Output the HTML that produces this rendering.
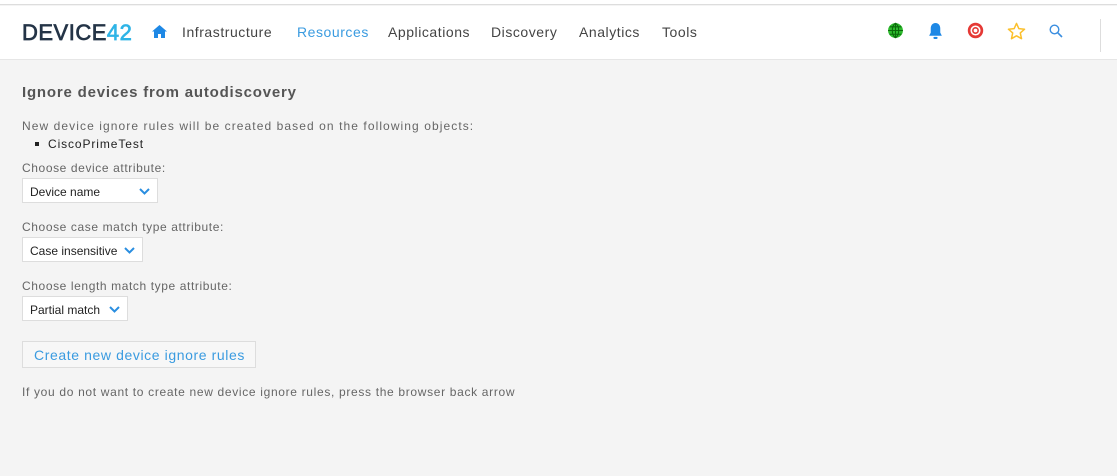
<!DOCTYPE html>
<html><head><style>
*{margin:0;padding:0;box-sizing:border-box}
body{width:1117px;height:476px;background:#f4f4f4;font-family:"Liberation Sans",sans-serif;color:#555;overflow:hidden;position:relative}
.top{position:absolute;left:0;top:0;width:1117px;height:5px;background:#fff;border-bottom:1px solid #ddd}
.hdr{position:absolute;left:0;top:6px;width:1117px;height:54px;background:#fff;border-bottom:1px solid #e6e6e6}
.logo{position:absolute;left:22px;top:14px;font-size:22px;letter-spacing:0.5px;color:#243447;-webkit-text-stroke:0.7px #243447}
.logo span{color:#2fb4e6;-webkit-text-stroke:0.7px #2fb4e6}
.nav{position:absolute;top:18px;font-size:14px;color:#444;letter-spacing:0.55px}
.ic{position:absolute;top:16px}
.sep{position:absolute;left:1100px;top:13px;width:1px;height:33px;background:#ddd}
.t{position:absolute;left:22px;font-size:12px;color:#666;letter-spacing:0.6px}
.sel{position:absolute;left:22px;height:25px;background:#fff;border:1px solid #ddd;font-size:12px;color:#222;padding:6px 0 0 7px}
.sel svg{position:absolute;right:7px;top:9px}
.btn{position:absolute;left:22px;top:341px;width:234px;height:27px;border:1px solid #ddd;background:#f7f7f7;color:#3a9be0;font-size:14px;padding:5px 0 0 11px;letter-spacing:0.6px}
</style></head><body>
<div class="top"></div>
<div class="hdr">
<div class="logo">DEVICE<span>42</span></div>
<svg class="ic" style="left:152px;top:19px" width="15" height="13" viewBox="0 0 15 13"><path d="M7.5 0L0 6.5h2V13h4V9h3v4h4V6.5h2z" fill="#1e88e5"/></svg>
<div class="nav" style="left:182px">Infrastructure</div>
<div class="nav" style="left:297px;color:#3a9be0">Resources</div>
<div class="nav" style="left:388px">Applications</div>
<div class="nav" style="left:491px">Discovery</div>
<div class="nav" style="left:579px">Analytics</div>
<div class="nav" style="left:662px">Tools</div>
<svg class="ic" style="left:887px" width="17" height="17" viewBox="0 0 16 16"><circle cx="8" cy="8" r="7" fill="#2dbb2d"/><path d="M1 8h14M8 1v14M2.5 4.5h11M2.5 11.5h11M8 1c-4 3-4 11 0 14M8 1c4 3 4 11 0 14" stroke="#0a6a0a" stroke-width="1" fill="none"/></svg>
<svg class="ic" style="left:927px" width="17" height="18" viewBox="0 0 16 17"><path d="M8 1c-3 0-4.5 2.5-4.5 5v4L2 13h12l-1.5-3V6C12.5 3.5 11 1 8 1z" fill="#1e88e5"/><rect x="6" y="14" width="4" height="2" rx="1" fill="#1e88e5"/></svg>
<svg class="ic" style="left:967px" width="17" height="17" viewBox="0 0 16 16"><circle cx="8" cy="8" r="6" fill="none" stroke="#e53935" stroke-width="2.5"/><circle cx="8" cy="8" r="2.5" fill="none" stroke="#e53935" stroke-width="1.5"/></svg>
<svg class="ic" style="left:1007px" width="19" height="18" viewBox="0 0 20 19"><path d="M10 1.5l2.5 5.5 6 .6-4.5 4 1.3 6L10 14.6 4.7 17.6l1.3-6-4.5-4 6-.6z" fill="none" stroke="#fbc02d" stroke-width="1.6" stroke-linejoin="round"/></svg>
<svg class="ic" style="left:1049px;top:18px" width="14" height="14" viewBox="0 0 14 14"><circle cx="5.5" cy="5.5" r="4.3" fill="none" stroke="#3a8ee0" stroke-width="1.4"/><path d="M8.7 8.7L13 13" stroke="#3a8ee0" stroke-width="1.6"/></svg>
<div class="sep"></div>
</div>
<div class="t" style="top:84px;font-size:15px;font-weight:bold;color:#555;letter-spacing:0.8px">Ignore devices from autodiscovery</div>
<div class="t" style="top:119px;letter-spacing:1.08px">New device ignore rules will be created based on the following objects:</div>
<div class="t" style="top:137px;left:48px;color:#222;letter-spacing:0.9px"><span style="position:absolute;left:-13px;top:5px;width:4px;height:4px;background:#222"></span>CiscoPrimeTest</div>
<div class="t" style="top:161px">Choose device attribute:</div>
<div class="sel" style="top:178px;width:136px">Device name<svg width="11" height="7" viewBox="0 0 11 7"><path d="M1 1l4.5 4.5L10 1" stroke="#2a8ee0" stroke-width="2" fill="none"/></svg></div>
<div class="t" style="top:220px">Choose case match type attribute:</div>
<div class="sel" style="top:237px;width:121px">Case insensitive<svg width="11" height="7" viewBox="0 0 11 7"><path d="M1 1l4.5 4.5L10 1" stroke="#2a8ee0" stroke-width="2" fill="none"/></svg></div>
<div class="t" style="top:279px">Choose length match type attribute:</div>
<div class="sel" style="top:296px;width:106px">Partial match<svg width="11" height="7" viewBox="0 0 11 7"><path d="M1 1l4.5 4.5L10 1" stroke="#2a8ee0" stroke-width="2" fill="none"/></svg></div>
<div class="btn">Create new device ignore rules</div>
<div class="t" style="top:385px;letter-spacing:0.67px">If you do not want to create new device ignore rules, press the browser back arrow</div>
</body></html>
